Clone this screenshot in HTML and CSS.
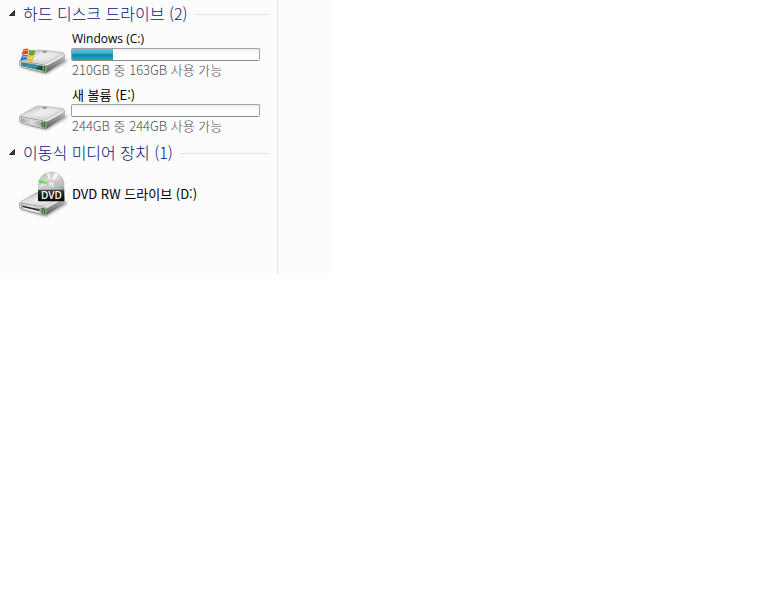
FILE: index.html
```html
<!DOCTYPE html>
<html lang="ko">
<head>
<meta charset="utf-8">
<title>컴퓨터</title>
<link rel="stylesheet" href="styles.css">
</head>
<body>
<svg class="defs" aria-hidden="true">
  <defs>
    <linearGradient id="top" x1="0" y1="0" x2="1" y2="1">
      <stop offset="0" stop-color="#b0b0b1"/><stop offset=".4" stop-color="#e6e6e7"/><stop offset=".7" stop-color="#cfcfd0"/><stop offset="1" stop-color="#b3b3b5"/>
    </linearGradient>
    <linearGradient id="side" x1="0" y1="0" x2="0" y2="1">
      <stop offset="0" stop-color="#c6c6c7"/><stop offset=".5" stop-color="#88898b"/><stop offset="1" stop-color="#606163"/>
    </linearGradient>
    <linearGradient id="front" x1="0" y1="0" x2="1" y2="0">
      <stop offset="0" stop-color="#a2a2a6"/><stop offset=".45" stop-color="#dededf"/><stop offset="1" stop-color="#8e9095"/>
    </linearGradient>
    <linearGradient id="teal" x1="0" y1="0" x2="1" y2="0">
      <stop offset="0" stop-color="#4a8d9c"/><stop offset=".45" stop-color="#1d6677"/><stop offset="1" stop-color="#0d3f49"/>
    </linearGradient>
    <linearGradient id="disc" x1="0" y1="0" x2="1" y2="1">
      <stop offset="0" stop-color="#a9a9a9"/><stop offset=".45" stop-color="#e2e2e2"/><stop offset="1" stop-color="#999"/>
    </linearGradient>
    <linearGradient id="label" x1="0" y1="0" x2="0" y2="1">
      <stop offset="0" stop-color="#4a4a4a"/><stop offset=".4" stop-color="#1c1c1c"/><stop offset="1" stop-color="#050505"/>
    </linearGradient>
    <filter id="soft" x="-20%" y="-50%" width="140%" height="200%"><feGaussianBlur stdDeviation="3"/></filter>
    <g id="body">
      <path d="M16 84 94 103 155 66 155 56 92 92Z" fill="#555" opacity=".5" filter="url(#soft)"/>
      <path d="M92 77 148 46Q151 48 150 58Q149 63 143 67L98 96Q94 99 90 98Z" fill="url(#side)"/>
      <path d="M15 61Q16 58 22 55L62 32Q68 29 76 30L140 37Q149 39 149 46Q148 50 142 53L101 76Q96 79 88 78L20 66Q14 65 15 61Z" fill="url(#top)" stroke="#8c8c8f" stroke-width="1.5"/>
      <path d="M48 58 82 36 132 42 96 67Z" fill="#f3f3f4" opacity=".55"/>
      <path d="M21 62 89 74Q96 75 101 71L145 47" fill="none" stroke="#fafafa" stroke-width="3"/>
      <path d="M14 64Q14 61 19 62L88 75Q94 76 94 81V94Q94 99 88 98L20 82Q14 80 14 75Z" fill="#e2e2e3" stroke="#707074" stroke-width="2"/>
    </g>
    <g id="lamp">
      <path d="M80 77 91 79V95L80 93Z" fill="#173613"/>
      <path d="M82 79H88V93L82 92Z" fill="#36d411"/>
    </g>
  </defs>
</svg>

<main class="explorer">
  <div class="content">
    <section class="group">
      <h2 class="group-title">
        <button type="button" class="toggle" aria-expanded="true"><svg class="arrow" viewBox="0 0 6 6" aria-hidden="true"><path d="M5.5.5V5.5H.5Z"/></svg>하드 디스크 드라이브 (2)</button>
      </h2>
      <ul class="drives">
        <li class="drive">
          <svg class="icon" viewBox="0 0 168 114" aria-hidden="true">
            <use href="#body"/>
            <path d="M18 66 87 79Q90 80 90 83V94L21 79Q18 78 18 75Z" fill="url(#teal)"/>
            <path d="M28 78 48 68 75 77 60 87Z" fill="#55a9b4" opacity=".6"/>
            <use href="#lamp"/>
            <ellipse cx="89" cy="36" rx="7" ry="3" fill="#8c8c8e"/>
            <path d="M24 29Q32 23 41 27L38 43Q29 40 20 45Z" fill="#d24b20"/>
            <path d="M43 29Q51 33 61 29L58 45Q49 49 40 44Z" fill="#6fa32f"/>
            <path d="M20 47Q29 42 38 46L34 61Q26 57 17 63Z" fill="#2a6fba"/>
            <path d="M39 47Q48 51 57 47L53 64Q44 66 36 62Z" fill="#f0b41e"/>
            <path d="M25 31Q32 26 39 29L38 34Q31 31 24 36Z" fill="#f08a5c"/>
            <path d="M23 49Q30 46 36 48L35 53Q28 50 22 54Z" fill="#79bdf0"/>
            <path d="M42 50Q48 53 54 51L52 57Q46 58 40 55Z" fill="#ffe06a"/>
          </svg>
          <div class="info">
            <span class="name latin">Windows (C:)</span>
            <div class="bar" role="meter" aria-label="Windows (C:)" aria-valuemin="0" aria-valuemax="210" aria-valuenow="47"><div class="used" style="width:22%"></div></div>
            <span class="space">210GB 중 163GB 사용 가능</span>
          </div>
        </li>
        <li class="drive">
          <svg class="icon" viewBox="0 0 168 114" aria-hidden="true">
            <use href="#body"/>
            <path d="M18 66 87 79Q90 80 90 83V94L21 79Q18 78 18 75Z" fill="url(#front)"/>
            <use href="#lamp"/>
            <ellipse cx="89" cy="36" rx="7" ry="3" fill="#8c8c8e"/>
          </svg>
          <div class="info">
            <span class="name">새 볼륨 (E:)</span>
            <div class="bar" role="meter" aria-label="새 볼륨 (E:)" aria-valuemin="0" aria-valuemax="244" aria-valuenow="0"><div class="used" style="width:0%"></div></div>
            <span class="space">244GB 중 244GB 사용 가능</span>
          </div>
        </li>
      </ul>
    </section>
    <section class="group">
      <h2 class="group-title">
        <button type="button" class="toggle" aria-expanded="true"><svg class="arrow" viewBox="0 0 6 6" aria-hidden="true"><path d="M5.5.5V5.5H.5Z"/></svg>이동식 미디어 장치 (1)</button>
      </h2>
      <ul class="drives removable">
        <li class="drive">
          <svg class="icon disc" viewBox="0 0 168 156" aria-hidden="true">
            <g transform="translate(0 43)">
              <use href="#body"/>
              <path d="M18 66 87 79Q90 80 90 83V94L21 79Q18 78 18 75Z" fill="url(#front)"/>
              <path d="M23 70 73 81V87L23 75Z" fill="#2c2c2e"/>
              <path d="M23 75 73 87V90L23 78Z" fill="#f2f2f2"/>
              <use href="#lamp"/>
            </g>
            <path d="M71 68V50C71 0 147 0 147 50V68Z" fill="url(#disc)" stroke="#a0a0a0" stroke-width="1.5"/>
            <path d="M109 48 73 35 72 45Z" fill="#3fdc4a" opacity=".8"/>
            <path d="M109 48 79 24 75 31Z" fill="#cfe66a" opacity=".6"/>
            <path d="M109 48 120 15 130 18Z" fill="#fff"/>
            <path d="M109 48 94 16 103 14Z" fill="#fff" opacity=".8"/>
            <path d="M109 48 143 33 146 43Z" fill="#f0a9d8" opacity=".8"/>
            <path d="M109 48 146 46 146 56Z" fill="#9bd5ae" opacity=".8"/>
            <path d="M109 48 73 60 80 66Z" fill="#d9a4d0" opacity=".6"/>
            <circle cx="109" cy="48" r="12" fill="#dedede" stroke="#a0a0a0" stroke-width="1.5"/>
            <circle cx="109" cy="48" r="5" fill="#fafafa" stroke="#b2b2b2" stroke-width="1.5"/>
            <path d="M69 65H148V97Q148 100 145 100H72Q69 100 69 97Z" fill="url(#label)"/>
            <text class="dvd" x="109" y="92" text-anchor="middle">DVD</text>
          </svg>
          <div class="info">
            <span class="name">DVD RW 드라이브 (D:)</span>
          </div>
        </li>
      </ul>
    </section>
  </div>
  <aside class="preview"></aside>
</main>
</body>
</html>
```

FILE: styles.css
```css
* {
  box-sizing: border-box;
}

body {
  margin: 0;
  background: #fff;
  color: #000;
  font-family: "Noto Sans CJK KR", sans-serif;
  font-size: 13px;
  line-height: 16px;
}

.defs {
  position: absolute;
  width: 0;
  height: 0;
}

.explorer {
  display: grid;
  grid-template-columns: 5fr 1fr;
  max-width: 333px;
  min-height: 274px;
  background: #fcfcfc;
}

.content {
  padding: 0 8px;
  border-right: 1px solid #d9e2ef;
}

.group-title {
  display: flex;
  align-items: center;
  gap: 7px;
  height: 28px;
  margin: 0;
}

.group-title::after {
  content: "";
  flex: 1;
  height: 1px;
  background: #e0e0e0;
}

.toggle {
  display: flex;
  align-items: center;
  gap: 8px;
  padding: 0 0 2px 1px;
  border: 0;
  background: none;
  color: #00127a;
  font-family: "Noto Sans CJK KR", sans-serif;
  font-size: 16px;
  font-weight: 300;
  line-height: 20px;
  white-space: nowrap;
}

.arrow {
  width: 6px;
  height: 6px;
  fill: #404040;
  stroke: #262626;
}

.drives {
  display: grid;
  gap: 9px;
  margin: 0;
  padding: 3px 9px 5px 7px;
  list-style: none;
}

.drive {
  display: flex;
  align-items: flex-end;
}

.icon {
  flex: none;
  width: 56px;
  height: 38px;
}

.icon.disc {
  height: 52px;
}

.removable {
  padding-top: 1px;
}

.removable .drive {
  align-items: center;
}

.info {
  flex: 1;
  display: grid;
  gap: 1px;
}

.name,
.space {
  padding-left: 1px;
  white-space: nowrap;
}

.latin {
  font-family: "Open Sans", sans-serif;
  font-size: 12px;
}

.space {
  color: #505050;
  font-weight: 300;
}

.bar {
  height: 13px;
  border: 1px solid #a0a0a0;
  border-bottom-color: #8a8a8a;
  border-radius: 2px;
  background: linear-gradient(#f1f1f1, #fff 50%);
  overflow: hidden;
}

.used {
  height: 100%;
  background: linear-gradient(#62c4da, #3aa9c4 45%, #0e86a6 50%, #23a6c2);
}

.dvd {
  fill: #fff;
  font-family: "Open Sans", sans-serif;
  font-size: 30px;
  font-weight: 600;
}
```
